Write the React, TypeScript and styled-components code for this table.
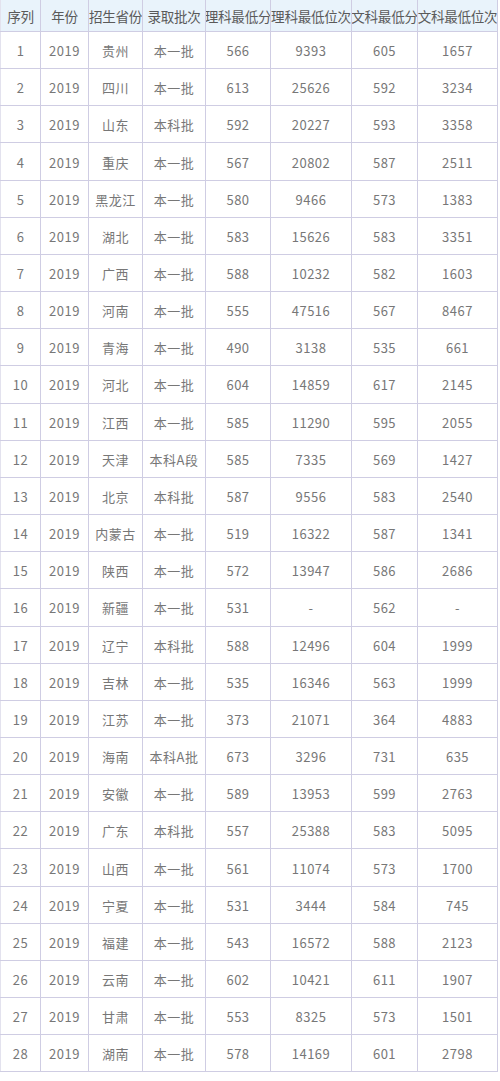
import React from "react";
import styled, { createGlobalStyle } from "styled-components";

const Global = createGlobalStyle`
  html, body { margin: 0; padding: 0; background: #ffffff; }
  body { font-family: "Noto Sans CJK SC", "Noto Sans", sans-serif; }
`;

const COLS = "41px 48px 54px 63px 65px 81px 66px 80px";

const Table = styled.div`
  width: 498px;
  display: flex;
  flex-direction: column;
`;

const Row = styled.div<{ $head?: boolean }>`
  display: grid;
  grid-template-columns: ${COLS};
  height: ${(p) => (p.$head ? "32px" : "37.16px")};
  box-sizing: border-box;
  background: ${(p) => (p.$head ? "#e9f3fb" : "#ffffff")};
  border-bottom: 1px solid #cfcde3;
`;

const Cell = styled.div<{ $head?: boolean; $first?: boolean }>`
  display: flex;
  align-items: center;
  justify-content: center;
  box-sizing: border-box;
  border-right: 1px solid #cfcde3;
  border-left: ${(p) => (p.$first ? "1px solid #e3e2ee" : "none")};
  font-size: ${(p) => (p.$head ? "13.6px" : "13px")};
  color: ${(p) => (p.$head ? "#5a5a5a" : "#777777")};
  white-space: nowrap;
  overflow: hidden;
  letter-spacing: ${(p) => (p.$head ? "-0.3px" : "0.5px")};
  padding-top: ${(p) => (p.$head ? "0" : "1px")};
`;

const headers = ["序列", "年份", "招生省份", "录取批次", "理科最低分", "理科最低位次", "文科最低分", "文科最低位次"];

const data: string[][] = [
  ["贵州", "本一批", "566", "9393", "605", "1657"],
  ["四川", "本一批", "613", "25626", "592", "3234"],
  ["山东", "本科批", "592", "20227", "593", "3358"],
  ["重庆", "本一批", "567", "20802", "587", "2511"],
  ["黑龙江", "本一批", "580", "9466", "573", "1383"],
  ["湖北", "本一批", "583", "15626", "583", "3351"],
  ["广西", "本一批", "588", "10232", "582", "1603"],
  ["河南", "本一批", "555", "47516", "567", "8467"],
  ["青海", "本一批", "490", "3138", "535", "661"],
  ["河北", "本一批", "604", "14859", "617", "2145"],
  ["江西", "本一批", "585", "11290", "595", "2055"],
  ["天津", "本科A段", "585", "7335", "569", "1427"],
  ["北京", "本科批", "587", "9556", "583", "2540"],
  ["内蒙古", "本一批", "519", "16322", "587", "1341"],
  ["陕西", "本一批", "572", "13947", "586", "2686"],
  ["新疆", "本一批", "531", "-", "562", "-"],
  ["辽宁", "本科批", "588", "12496", "604", "1999"],
  ["吉林", "本一批", "535", "16346", "563", "1999"],
  ["江苏", "本一批", "373", "21071", "364", "4883"],
  ["海南", "本科A批", "673", "3296", "731", "635"],
  ["安徽", "本一批", "589", "13953", "599", "2763"],
  ["广东", "本科批", "557", "25388", "583", "5095"],
  ["山西", "本一批", "561", "11074", "573", "1700"],
  ["宁夏", "本一批", "531", "3444", "584", "745"],
  ["福建", "本一批", "543", "16572", "588", "2123"],
  ["云南", "本一批", "602", "10421", "611", "1907"],
  ["甘肃", "本一批", "553", "8325", "573", "1501"],
  ["湖南", "本一批", "578", "14169", "601", "2798"],
];

export default function App() {
  return (
    <>
      <Global />
      <Table>
        <Row $head>
          {headers.map((h, i) => (
            <Cell key={h} $head $first={i === 0}>
              {h}
            </Cell>
          ))}
        </Row>
        {data.map((r, idx) => {
          const cells = [String(idx + 1), "2019", ...r];
          return (
            <Row key={idx}>
              {cells.map((c, i) => (
                <Cell key={i} $first={i === 0}>
                  {c}
                </Cell>
              ))}
            </Row>
          );
        })}
      </Table>
    </>
  );
}
